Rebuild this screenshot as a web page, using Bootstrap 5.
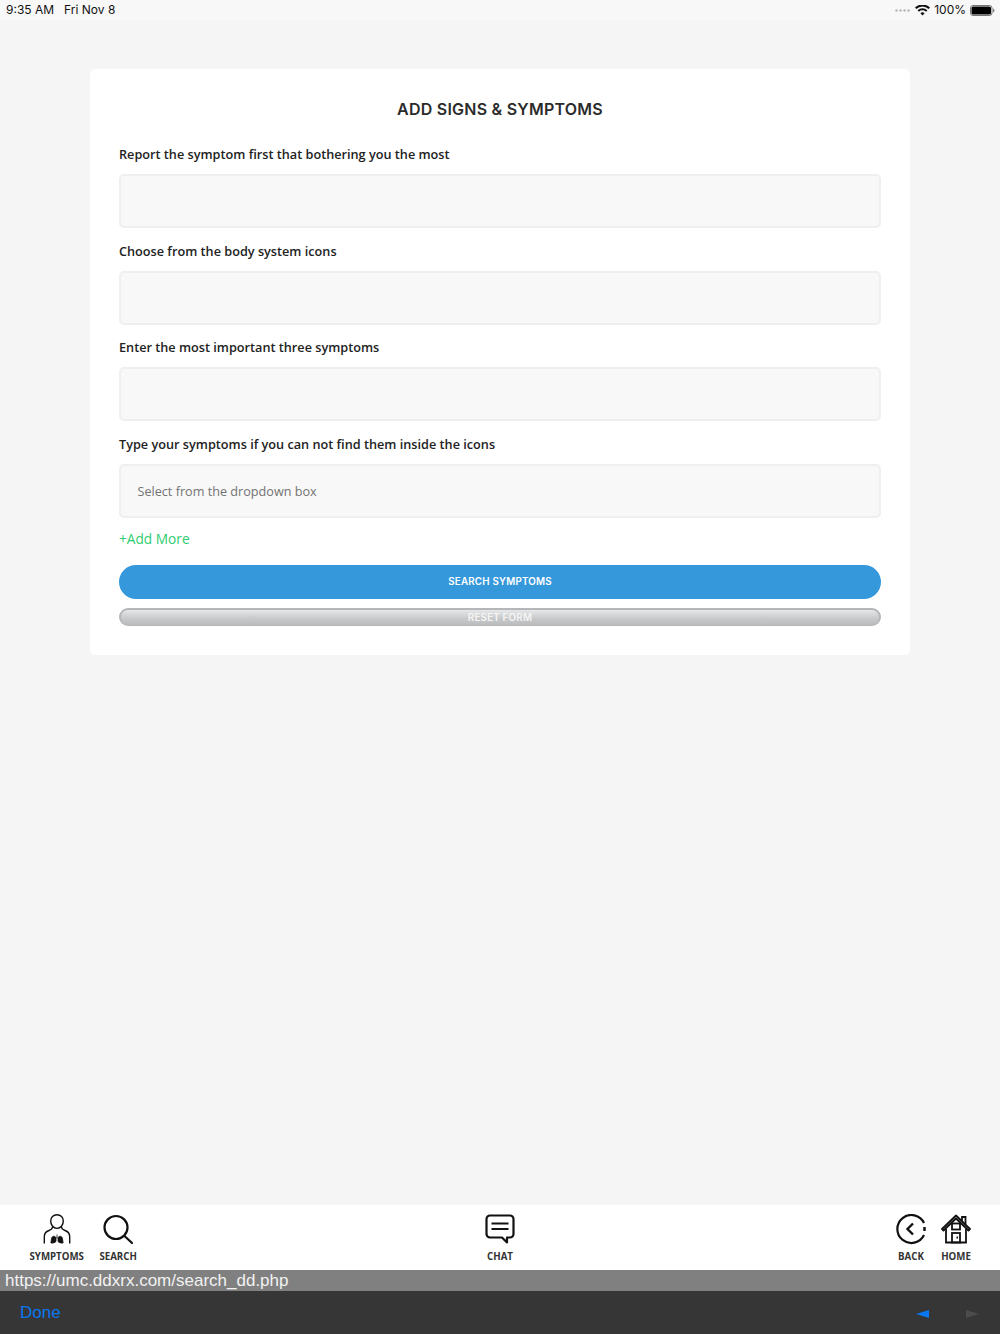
<!DOCTYPE html>
<html lang="en">
<head>
    <meta charset="UTF-8">
    <meta name="viewport" content="width=device-width, initial-scale=1.0">
    <title>Add Signs &amp; Symptoms</title>
    <link href="https://cdn.jsdelivr.net/npm/bootstrap@5.3.0/dist/css/bootstrap.min.css" rel="stylesheet">
    <style>
        html, body { height: 1334px; overflow: hidden; }
        body { background: #f5f5f5; font-family: "Open Sans", sans-serif; }
        .status-bar { height: 20px; background: #f8f8f8; font: 12px/20px Inter, "Liberation Sans", sans-serif; color: #111; padding: 0 5px 0 6px; }
        .status-time { margin-right: 10px; }
        .signal-dots { width: 16px; margin-right: 4px; }
        .main-area { padding-top: 49px; }
        .form-panel { width: 820px; height: 586px; background: #fff; border-radius: 5px; padding: 30px 29px 0; }
        .form-title { font: 600 16px/20px Inter, "Open Sans", sans-serif; letter-spacing: .23px; color: #2b2b2b; margin: 0 0 27px; text-transform: uppercase; }
        .field-label { font-size: 12.7px; font-weight: 600; line-height: 17px; color: #222; margin-bottom: 11px; display: block; }
        .field-box { height: 54px; background: #f8f8f8; border: 2px solid #efefef; border-radius: 5px; margin-bottom: 14.67px; font-size: 12.65px; color: #666; padding: 0 16.5px; box-shadow: none; }
        .field-box::placeholder { color: #737373; opacity: 1; }
        .field-box:focus { background: #f8f8f8; border-color: #efefef; box-shadow: none; }
        .add-more { font-size: 13.7px; line-height: 20px; color: #2ecc71; text-decoration: none; display: block; margin: -3.67px 0 16.5px; }
        .pill-search, .pill-reset { display: block; width: 100%; color: #fff; font: 600 9.8px/1 Inter, "Open Sans", sans-serif; letter-spacing: .2px; text-transform: uppercase; border-radius: 17px; padding: 0; }
        .pill-search { height: 33.5px; background: #3498db; border: 0; margin-bottom: 9px; }
        .pill-reset { height: 18px; border: 2px solid #b4b6b9; border-bottom-width: 1px; background: linear-gradient(#e6e7e8, #c9cacc 55%, #b9bbbd); color: #f5f5f5; }
        .tab-bar { height: 65.5px; background: #fff; padding: 9px 29px 0 29.5px; }
        .tab-item { color: #333; font-size: 9.7px; font-weight: 700; line-height: 14px; text-align: center; text-transform: uppercase; text-decoration: none; display: flex; flex-direction: column; align-items: center; }
        .tab-item svg { display: block; height: 32px; margin-bottom: 4px; }
        .tab-symptoms { margin-right: 15.5px; }
        .tab-back { margin-right: 15px; }
        .url-bar { height: 21px; background: #808080; color: #f2f2f2; font: 17px/21px "Liberation Sans", sans-serif; padding-left: 5px; }
        .tool-bar { height: 43px; background: #363636; padding: 0 21px 0 20px; }
        .done-link { color: #0a78f0; font: 17px/43px "Liberation Sans", sans-serif; text-decoration: none; }
        .arrow-left, .arrow-right { width: 0; height: 0; border-top: 4px solid transparent; border-bottom: 4px solid transparent; margin-top: 19px; }
        .arrow-left { border-right: 13px solid #0a78f0; margin-right: 37px; }
        .arrow-right { border-left: 13px solid #4c4c4c; }
    </style>
</head>
<body class="d-flex flex-column">
    <div class="status-bar d-flex align-items-start">
        <span class="status-time">9:35 AM</span><span>Fri Nov 8</span>
        <div class="ms-auto d-flex align-items-center">
            <svg class="signal-dots" viewBox="0 0 16 3" height="3"><g fill="#b5b5b5"><circle cx="1.5" cy="1.5" r="1.2"/><circle cx="5.5" cy="1.5" r="1.2"/><circle cx="9.5" cy="1.5" r="1.2"/><circle cx="13.500" cy="1.5" r="1.2"/></g></svg>
            <svg width="15" height="11" viewBox="0 0 15 11" class="me-1"><path d="M7.5 10.5 5.4 8.2a3 3 0 0 1 4.2 0zM3.9 6.7 2.6 5.3a7 7 0 0 1 9.8 0l-1.3 1.4a5.2 5.2 0 0 0-7.2 0zM1.4 4 0 2.6a10.6 10.6 0 0 1 15 0L13.6 4A8.7 8.7 0 0 0 1.4 4z" fill="#111"/></svg>
            <span class="me-1">100%</span>
            <svg width="25" height="11" viewBox="0 0 25 11"><rect x=".5" y=".5" width="21.5" height="10" rx="2.5" fill="none" stroke="#777"/><rect x="1.5" y="1.5" width="19.5" height="8" rx="1.5" fill="#000"/><path d="M23 3.5c1 .2 1.5 1 1.5 2s-.5 1.800-1.500 2z" fill="#888"/></svg>
        </div>
    </div>

    <div class="main-area flex-grow-1 d-flex justify-content-center align-items-start">
        <form class="form-panel">
            <h2 class="form-title text-center">Add Signs &amp; Symptoms</h2>
            <label class="field-label">Report the symptom first that bothering you the most</label>
            <input type="text" class="form-control field-box">
            <label class="field-label">Choose from the body system icons</label>
            <input type="text" class="form-control field-box">
            <label class="field-label">Enter the most important three symptoms</label>
            <input type="text" class="form-control field-box">
            <label class="field-label">Type your symptoms if you can not find them inside the icons</label>
            <input type="text" class="form-control field-box" placeholder="Select from the dropdown box">
            <a href="#" class="add-more">+Add More</a>
            <button type="button" class="btn pill-search">Search Symptoms</button>
            <button type="reset" class="btn pill-reset">Reset Form</button>
        </form>
    </div>

    <div class="tab-bar d-flex">
        <a href="#" class="tab-item tab-symptoms">
            <svg width="28" height="32" viewBox="0 0 28 32" fill="none" stroke="#111" stroke-width="1.4">
                <path d="M14 .8c3.700 0 6.300 2.700 6.300 6.300 0 3.400-2.300 7.300-6.300 7.300s-6.300-3.900-6.300-7.300C7.700 3.500 10.300.8 14 .8z"/>
                <path d="M9.500 13c-.2 2-1.500 2.800-3.500 3.500-3.300 1.100-4.700 3-4.700 6.200v6.800M18.500 13c.2 2 1.500 2.800 3.500 3.500 3.300 1.100 4.700 3 4.700 6.200v6.800"/>
                <path d="M14 20.500v4M13 23.500c-1.500-2-4-1.500-4.500 1l-.6 4.500c1.700.4 4-.3 5.100-1.500zM15 23.500c1.500-2 4-1.500 4.500 1l.6 4.500c-1.700.4-4-.3-5.100-1.500z" fill="#111" stroke-width=".8"/>
            </svg>
            Symptoms
        </a>
        <a href="#" class="tab-item">
            <svg width="30" height="32" viewBox="0 0 30 32" fill="none" stroke="#111" stroke-width="2.2">
                <circle cx="13" cy="13.500" r="11.500"/><path d="M21.500 22l7.500 7" stroke-linecap="round"/>
            </svg>
            Search
        </a>
        <a href="#" class="tab-item position-absolute start-50 translate-middle-x">
            <svg width="30" height="32" viewBox="0 0 30 32" fill="none" stroke="#111" stroke-width="2.2">
                <path d="M5 1.500h20a3.500 3.500 0 0 1 3.500 3.500v15a3.500 3.500 0 0 1-3.500 3.500h-3v5l-5-5H5A3.500 3.500 0 0 1 1.500 20V5A3.500 3.500 0 0 1 5 1.500z" stroke-linejoin="round"/>
                <path d="M6.500 9.500h17M6.500 15h17"/>
            </svg>
            Chat
        </a>
        <a href="#" class="tab-item tab-back ms-auto">
            <svg width="30" height="32" viewBox="0 0 30 32" fill="none" stroke="#111" stroke-width="2.2">
                <path d="M28 9A14 14 0 1 0 28 21"/><path d="M28.500 13v4" stroke-width="2.500"/><path d="M17 9.500l-5.500 5.500 5.500 5.500" stroke-width="2.400"/>
            </svg>
            Back
        </a>
        <a href="#" class="tab-item">
            <svg width="30" height="32" viewBox="0 0 30 32" fill="none" stroke="#111" stroke-width="1.8">
                <path d="M1 15 15 1.500 29 15l-1.500 1.500L15 4.500 2.500 16.500z" stroke-linejoin="round"/>
                <path d="M21 7V3h3.500v7.500M5 15v13.500h20V15"/>
                <rect x="11" y="9.500" width="8" height="6"/><rect x="11" y="19" width="8" height="9.500"/><path d="M15.500 23.500h1.500"/>
            </svg>
            Home
        </a>
    </div>
    <div class="url-bar">https://umc.ddxrx.com/search_dd.php</div>
    <div class="tool-bar d-flex">
        <a href="#" class="done-link">Done</a>
        <div class="arrow-left ms-auto"></div>
        <div class="arrow-right"></div>
    </div>
    <script src="https://cdn.jsdelivr.net/npm/bootstrap@5.3.0/dist/js/bootstrap.bundle.min.js"></script>
</body>
</html>
